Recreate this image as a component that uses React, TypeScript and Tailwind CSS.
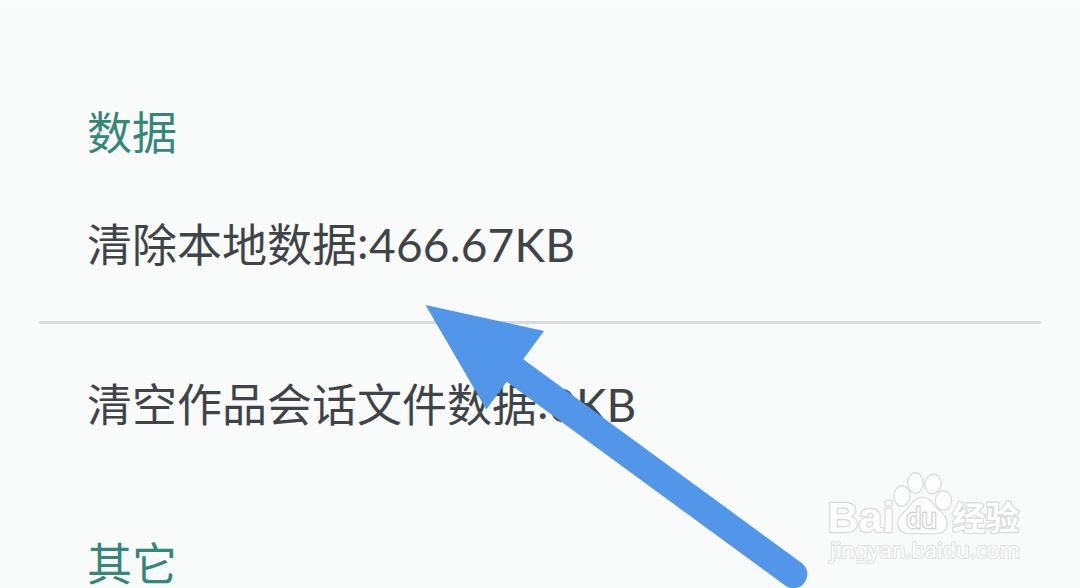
import React from "react";

const CJK = "font-['Noto_Sans_CJK_SC',sans-serif]";
const LATIN = "font-['Lato','Noto_Sans_CJK_SC',sans-serif]";

function SectionTitle({ children }: { children: React.ReactNode }) {
  return (
    <h2 className={`h-[60px] text-[45px] leading-[60px] whitespace-nowrap text-[#36867a] ${CJK}`}>{children}</h2>
  );
}

function Row({ label, value }: { label: string; value: string }) {
  return (
    <div className="flex h-[60px] items-baseline whitespace-nowrap text-[#404449]">
      <span className={`text-[45px] leading-[60px] ${CJK}`}>{label}</span>
      <span className={`text-[46px] leading-[60px] tracking-[0.2px] ${LATIN}`}>
        <span className="relative -top-[3px] inline-block w-[12px]">:</span>
        {value}
      </span>
    </div>
  );
}

function Arrow() {
  return (
    <svg className="absolute inset-0 h-[588px] w-[1080px]" viewBox="0 0 1080 588" aria-hidden="true">
      <path
        d="M425.5 305 544 331 523.3 359.3 802 563.2A14 14 0 0 1 785.5 585.8L506.7 381.7 486.3 409.5Z"
        fill="#5296ea"
      />
    </svg>
  );
}

function Watermark() {
  return (
    <svg className="absolute top-[465px] left-[815px] h-[110px] w-[220px]" viewBox="0 0 220 110">
      <g fill="#fdfdfd" stroke="#d9dada" strokeWidth="2.4" strokeLinejoin="round" paintOrder="stroke">
        <text x="12.500" y="67" fontFamily="Liberation Sans, sans-serif" fontWeight="700" fontSize="43" textLength="67" lengthAdjust="spacingAndGlyphs">
          Bai
        </text>
        <ellipse cx="87" cy="31" rx="7.5" ry="9.5" />
        <ellipse cx="100.5" cy="18" rx="7.2" ry="9.7" />
        <ellipse cx="118" cy="19" rx="7.5" ry="9.3" transform="rotate(12 118 19)" />
        <ellipse cx="128.5" cy="35.5" rx="7.5" ry="9.3" />
        <path d="M107.500 33C99 33 96 41 91 46C85 51 82 55 84 62C87 70 97 68 107.500 68C118 68 128 70 131 62C133 55 129 50 124 46C118 41 116 33 107.500 33Z" />
        <text x="91" y="63" fontFamily="Open Sans, sans-serif" fontWeight="400" fontSize="27" strokeWidth="3" stroke="#d3d4d4" textLength="31" lengthAdjust="spacingAndGlyphs">
          du
        </text>
        <text x="137" y="65" fontFamily="Noto Sans CJK SC, sans-serif" fontWeight="700" fontSize="33" textLength="67" lengthAdjust="spacingAndGlyphs">
          经验
        </text>
        <text x="15" y="92.500" fontFamily="Noto Sans, sans-serif" fontWeight="400" fontSize="22" strokeWidth="2.2" stroke="#dfe0e0" textLength="190" lengthAdjust="spacingAndGlyphs">
          jingyan.baidu.com
        </text>
      </g>
    </svg>
  );
}

export default function App() {
  return (
    <main className="relative flex h-[588px] w-[1080px] flex-col overflow-hidden border-t border-[#fdfdfd] bg-[#f9fbfa] pt-[100px]">
      <section className="shrink-0">
        <div className="pl-[87px]">
          <SectionTitle>数据</SectionTitle>
        </div>
        <div className="mt-[52px] pl-[87px]">
          <Row label="清除本地数据" value="466.67KB" />
        </div>
        <div className="mx-[39px] mt-[48px] h-[3px] bg-[#d9dbda]" />
        <div className="mt-[49px] pl-[87px]">
          <Row label="清空作品会话文件数据" value="0KB" />
        </div>
      </section>
      <section className="mt-[99px] shrink-0 pl-[87px]">
        <SectionTitle>其它</SectionTitle>
      </section>
      <div className="absolute -top-px left-0">
        <Arrow />
        <Watermark />
      </div>
    </main>
  );
}
